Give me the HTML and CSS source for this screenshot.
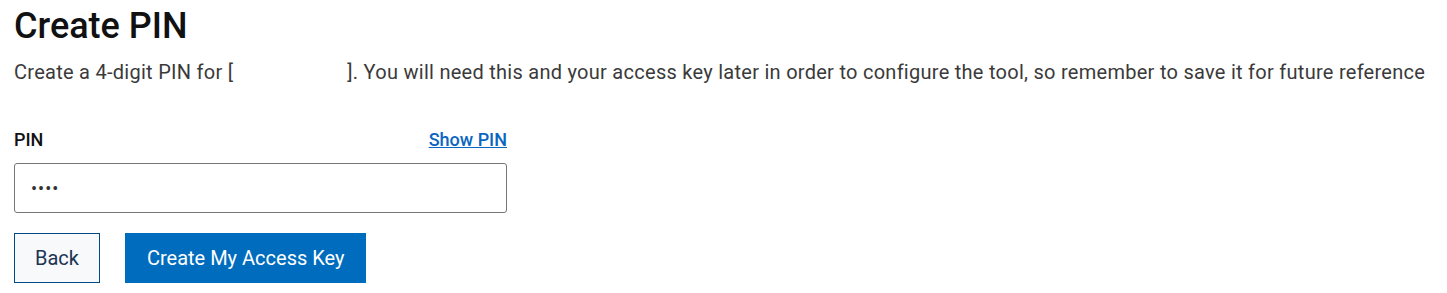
FILE: index.html
```html
<!DOCTYPE html>
<html>
<head>
  <meta charset="utf-8">
  <title>Create PIN</title>
  <link rel="stylesheet" href="styles.css">
</head>
<body>
  <div class="container">
    <h1>Create PIN</h1>
    <p class="intro">Create a 4-digit PIN for [<span class="redacted"></span>]. You will need this and your access key later in order to configure the tool, so remember to save it for future reference</p>

    <form class="pin-form">
      <div class="field-head">
        <label for="pinInput">PIN</label>
        <a href="#" class="show-pin">Show PIN</a>
      </div>
      <input type="password" id="pinInput" class="pin-input" value="1234">

      <div class="actions">
        <button type="button" class="btn btn-secondary">Back</button>
        <button type="button" class="btn btn-primary">Create My Access Key</button>
      </div>
    </form>
  </div>
</body>
</html>
```

FILE: styles.css
```css
body {
  font-family: Roboto, "Liberation Sans", Arial, sans-serif;
  background-color: #fff;
  margin: 0;
  padding: 0;
}

.container {
  padding: 5px 14px;
}

h1 {
  font-size: 36px;
  font-weight: 500;
  color: #111;
  margin: 0;
  line-height: 42px;
}

.intro {
  font-size: 20px;
  letter-spacing: 0.27px;
  color: #3a3a3a;
  margin: 11px 0 0 0;
  line-height: 28px;
  white-space: nowrap;
}

.redacted {
  display: inline-block;
  width: 114px;
}

.pin-form {
  width: 493px;
  margin-top: 43px;
}

.field-head {
  display: flex;
  justify-content: space-between;
  align-items: baseline;
  line-height: 21px;
  margin-bottom: 13px;
}

.field-head label {
  font-size: 18px;
  font-weight: 500;
  color: #111;
}

.show-pin {
  font-size: 18px;
  font-weight: 500;
  color: #0a66c2;
}

.pin-input {
  display: block;
  width: 100%;
  height: 50px;
  box-sizing: border-box;
  border: 1px solid #767676;
  border-radius: 3px;
  padding: 0 16px;
  font-size: 18px;
  color: #333;
  font-family: inherit;
  letter-spacing: 1px;
}

.actions {
  display: flex;
  gap: 25px;
  margin-top: 20px;
}

.btn {
  height: 50px;
  font-family: inherit;
  font-size: 20px;
  cursor: pointer;
}

.btn-secondary {
  background-color: #f7f9fb;
  border: 1px solid #004a87;
  color: #1c3553;
  padding: 0 20px;
}

.btn-primary {
  background-color: #006cbe;
  border: none;
  color: #fff;
  padding: 0 22px;
}
```
